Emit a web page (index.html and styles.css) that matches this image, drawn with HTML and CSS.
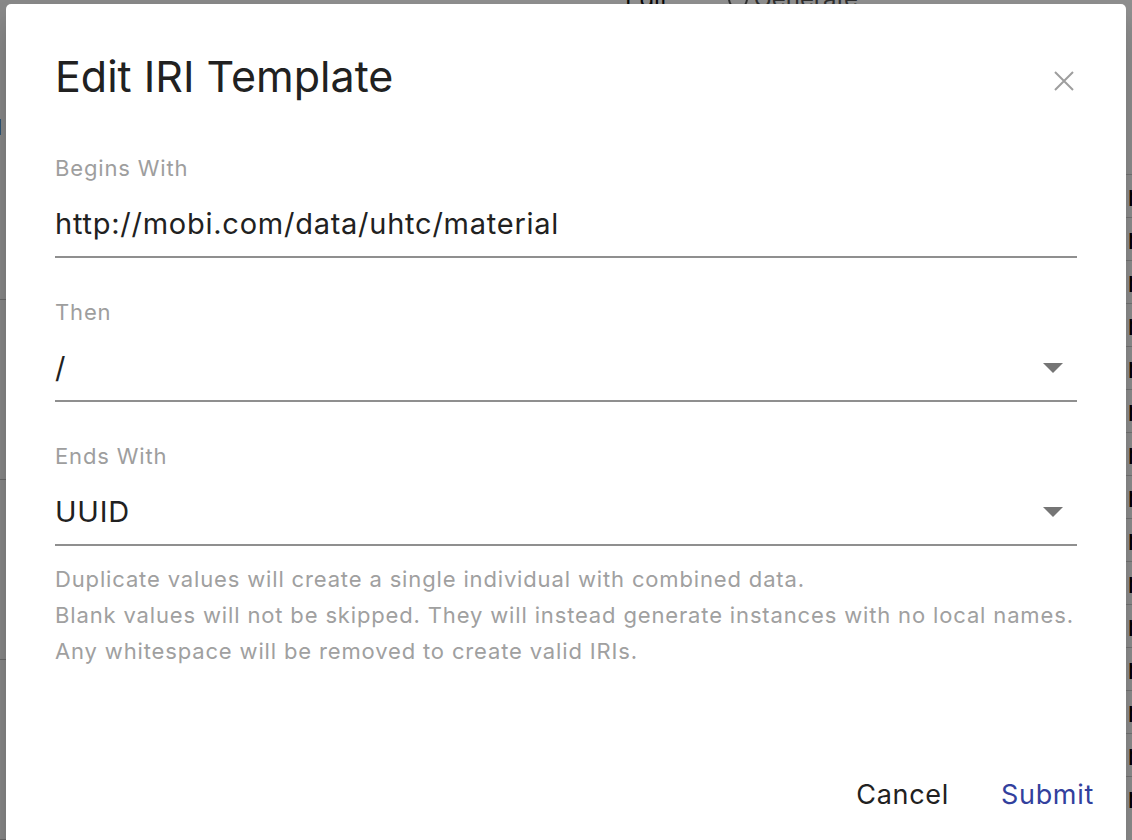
FILE: index.html
```html
<!DOCTYPE html>
<html lang="en">
<head>
<meta charset="utf-8">
<title>Edit IRI Template</title>
<link rel="stylesheet" href="styles.css">
</head>
<body>
<div class="page">
  <aside class="side">
    <div class="side-top"><span class="side-glyph">u</span></div>
    <div class="side-sec"></div>
    <div class="side-sec"></div>
    <div class="side-sec"></div>
  </aside>
  <main class="main">
    <div class="main-top">
      <span class="tab">Edit</span>
      <span class="tab-radio"><span class="circle"></span>Generate</span>
    </div>
    <div class="table">
      <div class="row"><span>n</span></div>
      <div class="row"><span>n</span></div>
      <div class="row"><span>n</span></div>
      <div class="row"><span>n</span></div>
      <div class="row"><span>n</span></div>
      <div class="row"><span>n</span></div>
      <div class="row"><span>n</span></div>
      <div class="row"><span>n</span></div>
      <div class="row"><span>n</span></div>
      <div class="row"><span>n</span></div>
      <div class="row"><span>n</span></div>
      <div class="row"><span>n</span></div>
      <div class="row"><span>n</span></div>
      <div class="row"><span>n</span></div>
      <div class="row"><span>n</span></div>
    </div>
  </main>
</div>
<div class="backdrop"></div>
<div class="dialog">
  <header class="dlg-head">
    <h1 class="dlg-title">Edit IRI Template</h1>
    <button class="close" aria-label="Close">
      <svg width="20" height="20" viewBox="0 0 20 20"><path d="M1 1L19 19M19 1L1 19" stroke="#9e9e9e" stroke-width="2" fill="none"/></svg>
    </button>
  </header>
  <div class="field">
    <div class="label">Begins With</div>
    <div class="value">http://mobi.com/data/uhtc/material</div>
  </div>
  <div class="field">
    <div class="label">Then</div>
    <div class="value select"><span>/</span><span class="arrow"></span></div>
  </div>
  <div class="field">
    <div class="label">Ends With</div>
    <div class="value select"><span>UUID</span><span class="arrow"></span></div>
  </div>
  <div class="hint">
    <p>Duplicate values will create a single individual with combined data.</p>
    <p>Blank values will not be skipped. They will instead generate instances with no local names.</p>
    <p>Any whitespace will be removed to create valid IRIs.</p>
  </div>
  <div class="actions">
    <button class="btn">Cancel</button>
    <button class="btn primary">Submit</button>
  </div>
</div>
</body>
</html>
```
FILE: styles.css
```css
* { box-sizing: border-box; }
html, body { margin: 0; padding: 0; }
body {
  width: 1132px;
  height: 840px;
  overflow: hidden;
  font-family: Inter, "Liberation Sans", sans-serif;
  background: #fff;
  position: relative;
}
.page {
  display: flex;
  height: 840px;
}
.side {
  width: 300px;
  display: flex;
  flex-direction: column;
  background: #f4f4f4;
}
.side-top {
  height: 310px;
  padding-top: 108px;
  border-bottom: 1px solid #bbb;
}
.side-glyph {
  display: block;
  font-size: 28px;
  margin-left: -14px;
  color: #111;
}
.side-sec {
  height: 190px;
  border-bottom: 1px solid #bbb;
}
.main { flex: 1; }
.main-top {
  height: 190px;
  display: flex;
  align-items: flex-start;
  gap: 60px;
  padding-left: 325px;
  margin-top: -16px;
  font-size: 24px;
  color: #111;
}
.tab-radio { display: flex; align-items: center; gap: 6px; color: #555; }
.circle { width: 20px; height: 20px; border: 2px solid #555; border-radius: 50%; }
.table { display: flex; flex-direction: column; }
.row {
  height: 43px;
  border-top: 1px solid #d0d0d0;
  display: flex;
  justify-content: flex-end;
  align-items: center;
  padding-right: 0;
  font-size: 28px;
  color: #000;
}
.row span { margin-right: -12px; }

.backdrop {
  position: absolute;
  inset: 0;
  background: rgba(0,0,0,0.44);
}
.dialog {
  position: absolute;
  left: 6px;
  top: 4px;
  width: 1120px;
  height: 900px;
  background: #fff;
  border-radius: 5px;
  padding: 0 49px;
  box-shadow: 0 11px 15px -7px rgba(0,0,0,.2), 0 24px 38px 3px rgba(0,0,0,.14);
}
.dlg-head {
  display: flex;
  align-items: center;
  justify-content: space-between;
  padding-top: 46px;
  height: 98px;
}
.dlg-title {
  margin: 0;
  font-size: 43px;
  line-height: 52px;
  font-weight: 400;
  color: #212121;
  letter-spacing: 0;
}
.close {
  border: 0;
  background: none;
  padding: 0;
  width: 20px;
  height: 20px;
  margin-right: 3px;
  margin-top: 10px;
  display: flex;
}
.field {
  display: flex;
  flex-direction: column;
  margin-top: 39px;
}
.dlg-head + .field { margin-top: 51px; }
.label {
  font-size: 22px;
  line-height: 30px;
  letter-spacing: 0.85px;
  color: #9e9e9e;
}
.value {
  margin-top: 21px;
  height: 54px;
  font-size: 29px;
  line-height: 40px;
  letter-spacing: 0.75px;
  color: #212121;
  border-bottom: 2px solid #8f8f8f;
  padding-bottom: 12px;
}
.select {
  display: flex;
  justify-content: space-between;
  align-items: center;
}
.arrow {
  width: 0;
  height: 0;
  border-left: 10px solid transparent;
  border-right: 10px solid transparent;
  border-top: 10px solid #757575;
  margin-right: 14px;
}
.hint {
  margin-top: 15px;
  font-size: 22px;
  line-height: 36px;
  letter-spacing: 0.85px;
  color: #a0a0a0;
}
.hint p { margin: 0; }
.actions {
  display: flex;
  justify-content: flex-end;
  gap: 20px;
  margin-top: 102px;
  margin-right: -33px;
}
.btn {
  font-family: Inter, "Liberation Sans", sans-serif;
  border: 0;
  background: none;
  padding: 0 16px;
  font-size: 27px;
  line-height: 48px;
  letter-spacing: 0.7px;
  color: #212121;
}
.btn.primary { color: #32409d; }
```
